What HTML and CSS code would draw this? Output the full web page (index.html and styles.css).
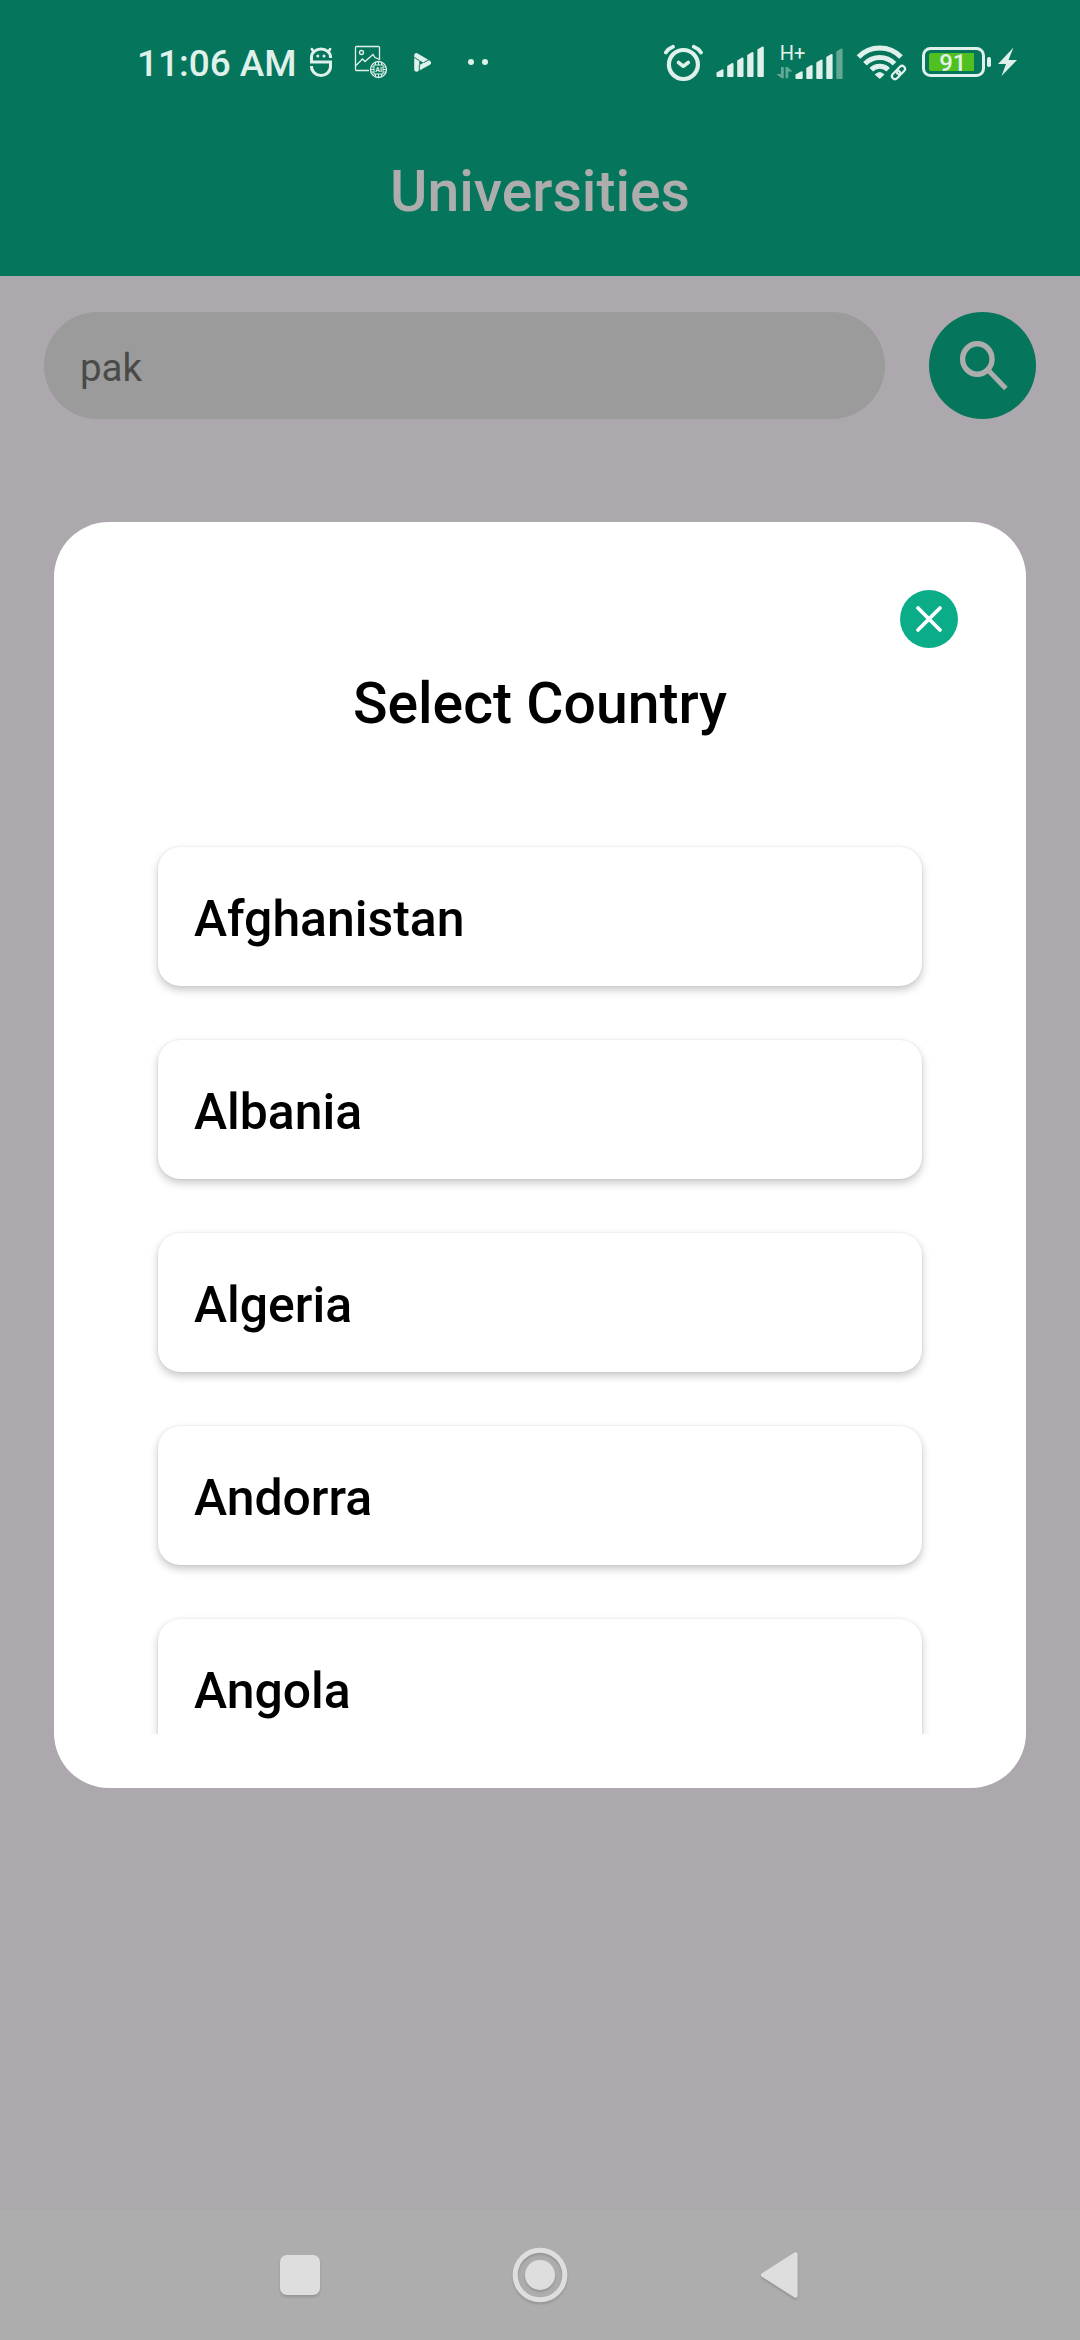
FILE: index.html
```html
<!DOCTYPE html>
<html lang="en">
<head>
<meta charset="utf-8">
<title>Universities</title>
<link rel="stylesheet" href="styles.css">
</head>
<body>
<div class="screen">
  <header class="header">
    <div class="status">
      <div class="status-left">
        <span class="clock">11:06 AM</span>
        <svg class="ic-s" width="24" height="32" viewBox="309 46 24 32" fill="none" stroke="#e0f1eb">
          <path d="M330.500 58V57A9.500 8 0 0 0 311.500 57V62H330.500V66.500A9.500 9 0 0 1 311.500 66.500V66" stroke-width="3"/>
          <path d="M313.500 51.500L311.800 49M328.500 51.500L330.200 49" stroke-width="2.500" stroke-linecap="round"/>
          <circle cx="317.800" cy="56" r="1.500" fill="#e0f1eb" stroke="none"/><circle cx="324" cy="56" r="1.500" fill="#e0f1eb" stroke="none"/>
        </svg>
        <svg class="ic-ai" width="34" height="34" viewBox="354 45 34 34" fill="none" stroke="#e0f1eb" stroke-width="1.300">
          <path d="M369 70.500H356.500Q355.500 70.500 355.500 69.500V47.500Q355.500 46.500 356.500 46.500H378.500Q379.500 46.500 379.500 47.500V60"/>
          <circle cx="361.500" cy="52.500" r="2"/>
          <path d="M356 65.500L362.500 59L365 61.500L373 54.500L375 57.500L379.500 59.500"/>
          <circle cx="378.500" cy="69.500" r="8"/>
          <rect x="374" y="65" width="9" height="9" stroke-width="1"/>
          <path d="M375.500 62.500V65M378.500 62V65M381.500 62.500V65M375.500 74V76.500M378.500 74V77M381.500 74V76.500M371 67H374M370.500 69.500H374M371 72H374M383 67H386M383 69.500H386.500M383 72H386" stroke-width="1"/>
          <text x="378.600" y="72.200" class="ai-label" text-anchor="middle">AI</text>
        </svg>
        <svg class="ic-play" width="19" height="21" viewBox="413 51 19 21" fill="none">
          <path d="M416.500 54.500V68.500L428.800 61.800Z" fill="#e0f1eb" stroke="#e0f1eb" stroke-width="4.600" stroke-linejoin="round"/>
          <path d="M419.300 59.200V64.200L423.500 61.700Z" fill="#05765b"/>
          <path d="M419.300 64V71M423.500 61.700L430 58.200M419.300 59.500L413.500 56" stroke="#05765b" stroke-width="1"/>
        </svg>
        <svg class="ic-dots" width="22" height="8" viewBox="467 58 22 8" fill="#e0f1eb"><circle cx="471" cy="62" r="3"/><circle cx="485" cy="62" r="3"/></svg>
      </div>
      <div class="status-right">
        <svg width="42" height="38" viewBox="662 42 42 38" fill="none" stroke="#e0f1eb" stroke-linecap="round">
          <circle cx="683.400" cy="63.500" r="14.500" stroke-width="4.200"/>
          <path d="M665.800 51.500Q668.500 47.500 673 45.800M701 51.500Q698.300 47.500 693.800 45.800" stroke-width="3.800"/>
          <path d="M678.500 61.500L683.300 65.200L688.300 61.500" stroke-width="3.600" stroke-linejoin="round"/>
        </svg>
        <svg class="ic-sig1" width="49" height="32" viewBox="716 47 49 32" fill="#e0f1eb">
          <path d="M716.500 73.500L722 70.500Q723.500 70 723.500 71V77Q723.500 78 722.500 78H717.500Q716.500 78 716.500 77Z"/>
          <path d="M727.200 67L731.700 64.200Q733.500 63.700 733.500 65V77Q733.500 78 732.500 78H728.200Q727.200 78 727.200 77Z"/>
          <path d="M737.200 61.500L741.700 58.700Q743.500 58.200 743.500 59.500V77Q743.500 78 742.500 78H738.200Q737.200 78 737.200 77Z"/>
          <path d="M747.200 56L751.700 53.200Q753.500 52.700 753.500 54V77Q753.500 78 752.500 78H748.200Q747.200 78 747.200 77Z"/>
          <path d="M757.400 50.500L762 47.700Q763.800 47.200 763.800 48.500V77Q763.800 78 762.800 78H758.400Q757.400 78 757.400 77Z"/>
        </svg>
        <svg class="ic-sig2" width="69" height="36" viewBox="775 43 69 36" fill="#e0f1eb">
          <text x="779.800" y="58.900" class="net">H+</text>
          <path d="M783.800 66H781V73H776.200L781.800 77.300H783.800ZM785.500 77.300H788.300V70.500H792.500L787.500 66H785.500Z" fill="#62a894"/>
          <path d="M795.500 73.500L801 70.500Q802.700 70 802.700 71V77Q802.700 78 801.700 78H796.500Q795.500 78 795.500 77Z"/>
          <path d="M806.300 67L810.800 64.200Q812.600 63.700 812.600 65V77Q812.600 78 811.600 78H807.300Q806.300 78 806.300 77Z"/>
          <path d="M816.300 61.500L820.800 58.700Q822.600 58.200 822.600 59.500V77Q822.600 78 821.600 78H817.300Q816.300 78 816.300 77Z"/>
          <path d="M826.300 56L830.800 53.200Q832.600 52.700 832.600 54V77Q832.600 78 831.600 78H827.300Q826.300 78 826.300 77Z"/>
          <path d="M836.300 50.500L840.800 47.700Q842.600 47.200 842.600 48.500V77Q842.600 78 841.600 78H837.300Q836.300 78 836.300 77Z" fill="#62a894"/>
        </svg>
        <svg class="ic-wifi" width="52" height="38" viewBox="856 43 52 38" fill="none" stroke="#e0f1eb">
          <path d="M858.500 57A29.500 29.500 0 0 1 901 57M865 63.700A20.500 20.500 0 0 1 894.500 63.700M871.300 69.700A12 12 0 0 1 888.200 69.700" stroke-width="5"/>
          <path d="M874.700 74.500Q879.800 69.500 884.500 74.500L879.800 79Z" fill="#e0f1eb" stroke="none"/>
          <g stroke-width="2.200" transform="rotate(-45 898.500 72.500)"><rect x="890.500" y="69.500" width="9.500" height="6" rx="3"/><rect x="897" y="69.500" width="9.500" height="6" rx="3"/></g>
        </svg>
        <svg class="ic-bat" width="98" height="34" viewBox="921 45 98 34">
          <rect x="923.500" y="48.500" width="60" height="27" rx="7" fill="none" stroke="#e0f1eb" stroke-width="3"/>
          <path d="M931 53H974V71H931Q929 71 929 69V55Q929 53 931 53Z" fill="#4fc01f"/>
          <rect x="987" y="57" width="4" height="10" rx="1.800" fill="#e0f1eb"/>
          <text x="952.800" y="71.200" class="pct" text-anchor="middle">91</text>
          <path d="M1013.500 47.500L998 64H1006L1001.500 76L1017 60H1008.500Z" fill="#e0f1eb"/>
        </svg>
      </div>
    </div>
    <h1 class="title">Universities</h1>
  </header>

  <main class="content">
    <div class="search-row">
      <div class="field">pak</div>
      <button class="search-btn" aria-label="Search">
        <svg width="107" height="107" viewBox="929 312 107 107" fill="none" stroke="#adadad">
          <ellipse cx="977.300" cy="359" rx="14.700" ry="15.200" stroke-width="5.400"/>
          <path d="M988.500 370.500L1005.800 388.500" stroke-width="5"/>
        </svg>
      </button>
    </div>
    <section class="modal">
      <button class="close" aria-label="Close">
        <svg width="58" height="58" viewBox="0 0 58 58" fill="none" stroke="#fff" stroke-width="3.800" stroke-linecap="round"><path d="M18 18L40 40M40 18L18 40"/></svg>
      </button>
      <h2 class="modal-title">Select Country</h2>
      <div class="list">
        <div class="card">Afghanistan</div>
        <div class="card">Albania</div>
        <div class="card">Algeria</div>
        <div class="card">Andorra</div>
        <div class="card">Angola</div>
      </div>
    </section>
  </main>

  <nav class="nav">
    <svg width="56" height="64" viewBox="272 2243 56 64" fill="#dedede"><rect x="280" y="2255" width="40" height="40" rx="7"/></svg>
    <svg width="64" height="64" viewBox="508 2243 64 64"><circle cx="540" cy="2275" r="24.800" fill="none" stroke="#dedede" stroke-width="5"/><circle cx="540" cy="2275" r="15" fill="#dedede"/></svg>
    <svg width="56" height="64" viewBox="752 2243 56 64" fill="#dedede" stroke="#dedede" stroke-width="4" stroke-linejoin="round"><path d="M763 2275L795.600 2254.300V2295.700Z"/></svg>
  </nav>
</div>
</body>
</html>
```
FILE: styles.css
```css
* { box-sizing: border-box; margin: 0; padding: 0; }
body { font-family: Roboto, sans-serif; }
svg { display: block; flex: none; overflow: visible; }
button { border: 0; display: block; }
.screen { width: 1080px; height: 2340px; display: flex; flex-direction: column; background: #ada8ad; overflow: hidden; }

.header { height: 276px; flex: none; background: #05765b; }
.status { height: 124px; padding: 0 61px 0 137px; display: flex; justify-content: space-between; align-items: center; }
.status-left, .status-right { display: flex; align-items: center; }
.clock { width: 172px; padding-top: 3px; font-size: 36.9px; line-height: 44px; font-weight: 500; color: #e0f1eb; white-space: nowrap; }
.ic-ai { margin-left: 21px; }
.ic-play { margin-left: 25px; }
.ic-dots { margin-left: 35px; }
.ic-sig1 { margin-left: 12px; }
.ic-sig2 { margin-left: 10px; }
.ic-wifi { margin-left: 12px; }
.ic-bat { margin-left: 13px; }
.ai-label { font-size: 7px; font-weight: 700; fill: #e0f1eb; stroke: none; }
.net { font-size: 20px; fill: #e0f1eb; }
.pct { font-size: 24px; font-weight: 500; fill: #e0f1eb; }
.title { font-size: 57.1px; line-height: 68px; font-weight: 500; color: #adadad; text-align: center; padding-top: 34px; }

.content { flex: 1; padding: 36px 44px 0; }
.search-row { display: flex; justify-content: space-between; }
.field { width: 841px; height: 107px; border-radius: 54px; background: #9a9b9a; padding: 4px 36px 0; font-size: 38.5px; line-height: 103px; color: #4a4a48; }
.search-btn { width: 107px; height: 107px; border-radius: 50%; background: #05765b; }

.modal { margin: 103px 10px 0; height: 1266px; border-radius: 55px; background: #fff; padding: 68px 68px 54px; display: flex; flex-direction: column; }
.close { width: 58px; height: 58px; border-radius: 50%; background: #0aad88; align-self: flex-end; }
.modal-title { margin-top: 22px; font-size: 57.1px; line-height: 68px; font-weight: 500; text-align: center; color: #000; }
.list { flex: 1; min-height: 0; margin: 59px -36px 0; padding: 50px 72px 0; overflow: hidden; display: flex; flex-direction: column; gap: 54px; }
.card { flex: none; height: 139px; border-radius: 22px; background: #fff; padding: 4px 36px 0; font-size: 49.9px; line-height: 137px; font-weight: 500; color: #000; box-shadow: 0 4px 9px rgba(0,0,0,.22), 0 0 2px rgba(0,0,0,.1); }

.nav { height: 130px; flex: none; background: #adadad; display: flex; justify-content: space-between; align-items: center; padding: 0 272px; }
.nav svg { filter: drop-shadow(0 2px 1px rgba(0,0,0,.14)); }
```
